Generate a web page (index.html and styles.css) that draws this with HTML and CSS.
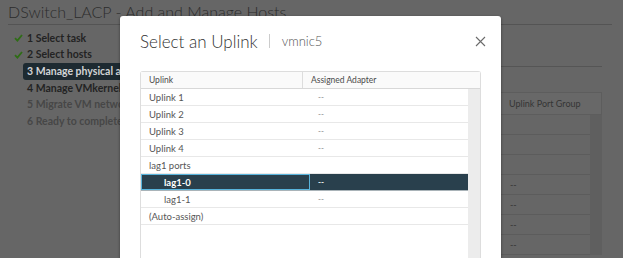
FILE: index.html
```html
<!DOCTYPE html>
<html lang="en">
<head>
  <meta charset="UTF-8">
  <meta name="viewport" content="width=device-width, initial-scale=1.0">
  <title>DSwitch_LACP - Add and Manage Hosts</title>
  <link rel="stylesheet" href="styles.css">
</head>
<body>
  <div class="wizard">
    <h1 class="wizard-title">DSwitch_LACP - Add and Manage Hosts</h1>
    <div class="wizard-body">
      <ol class="steps">
        <li class="step done"><span class="check"><svg width="9" height="8" viewBox="0 0 9 8"><path d="M1 4.2 L3.4 6.6 L8 1" fill="none" stroke="currentColor" stroke-width="1.8"/></svg></span><span class="step-label">1 Select task</span></li>
        <li class="step done"><span class="check"><svg width="9" height="8" viewBox="0 0 9 8"><path d="M1 4.2 L3.4 6.6 L8 1" fill="none" stroke="currentColor" stroke-width="1.8"/></svg></span><span class="step-label">2 Select hosts</span></li>
        <li class="step current"><span class="check"></span><span class="step-label">3 Manage physical adapters</span></li>
        <li class="step"><span class="check"></span><span class="step-label">4 Manage VMkernel adapters</span></li>
        <li class="step disabled"><span class="check"></span><span class="step-label">5 Migrate VM networking</span></li>
        <li class="step disabled"><span class="check"></span><span class="step-label">6 Ready to complete</span></li>
      </ol>
      <!-- the left part of this pane sits under the dialog -->
      <div class="step-content">
        <div class="step-head"></div>
        <div class="bg-grid">
          <div class="bg-grid-head">
            <span></span>
            <span>Uplink Port Group</span>
          </div>
          <div class="bg-grid-body">
            <div class="bg-grid-rows">
              <div class="bg-row"><span></span><span></span></div>
              <div class="bg-row"><span></span><span></span></div>
              <div class="bg-row"><span></span><span></span></div>
              <div class="bg-row"><span></span><span>--</span></div>
              <div class="bg-row"><span></span><span>--</span></div>
              <div class="bg-row"><span></span><span>--</span></div>
              <div class="bg-row"><span></span><span>--</span></div>
            </div>
            <div class="bg-scroll"></div>
          </div>
        </div>
      </div>
    </div>
  </div>

  <div class="modal">
    <div class="modal-header">
      <h2 class="modal-title">Select an Uplink</h2>
      <span class="modal-sep"></span>
      <span class="modal-sub">vmnic5</span>
      <button class="modal-close" type="button" aria-label="Close">
        <svg width="11" height="11" viewBox="0 0 11 11"><path d="M1 1 L10 10 M10 1 L1 10" stroke="#6b6b6b" stroke-width="1.1" fill="none"/></svg>
      </button>
    </div>
    <div class="uplink-grid">
      <div class="grid-head">
        <span class="head-cell first">Uplink</span>
        <span class="head-cell">Assigned Adapter</span>
      </div>
      <div class="grid-body">
        <div class="grid-rows">
          <div class="grid-row"><span class="cell">Uplink 1</span><span class="cell dash">--</span></div>
          <div class="grid-row"><span class="cell">Uplink 2</span><span class="cell dash">--</span></div>
          <div class="grid-row"><span class="cell">Uplink 3</span><span class="cell dash">--</span></div>
          <div class="grid-row"><span class="cell">Uplink 4</span><span class="cell dash">--</span></div>
          <div class="grid-row"><span class="cell">lag1 ports</span><span class="cell"></span></div>
          <div class="grid-row selected"><span class="cell sub focus">lag1-0</span><span class="cell dash">--</span></div>
          <div class="grid-row"><span class="cell sub">lag1-1</span><span class="cell dash">--</span></div>
          <div class="grid-row"><span class="cell">(Auto-assign)</span><span class="cell"></span></div>
        </div>
        <div class="grid-scroll"></div>
      </div>
    </div>
  </div>
</body>
</html>
```

FILE: styles.css
```css
html, body {
  margin: 0;
  height: 100%;
}
body {
  background-color: #666666;
  font-family: Lato, "Open Sans", sans-serif;
  overflow: hidden;
  position: relative;
}

/* wizard behind the dialog, already dimmed */
.wizard {
  padding: 0 11px 0 8px;
}
.wizard-title {
  margin: 0;
  font-size: 16px;
  font-weight: 300;
  color: #2c2c2c;
  line-height: 24px;
  border-bottom: 1px solid #545454;
}
.wizard-body {
  display: flex;
}
.steps {
  list-style: none;
  margin: 5px 0 0 0;
  padding: 0 0 0 6px;
  width: 111px;
  flex-shrink: 0;
}
.step {
  display: flex;
  align-items: center;
  height: 16.6px;
  font-size: 10.5px;
  font-weight: 700;
  color: #232323;
  white-space: nowrap;
}
.check {
  width: 9px;
  flex-shrink: 0;
  color: #2f6d16;
  display: flex;
}
.step-label {
  padding: 0 4px;
  line-height: 17px;
  border-radius: 3px;
  flex: 1;
  overflow: hidden;
}
.step.current .step-label {
  background-color: #1d2a31;
  color: #d2d4d6;
}
.step.disabled {
  color: #474747;
}
.step-content {
  flex: 1;
  padding-right: 10px;
}
.step-head {
  height: 41px;
  border-bottom: 1px solid #555555;
}
.bg-grid {
  margin-top: 25px;
  font-size: 9px;
  color: #353535;
}
.bg-grid-head {
  display: grid;
  grid-template-columns: 1fr 102px;
  height: 23px;
  align-items: center;
  background-color: #686868;
  border: 1px solid #5d5d5d;
  box-sizing: border-box;
}
.bg-grid-head span,
.bg-row span {
  padding-left: 10px;
}
.bg-grid-body {
  display: flex;
}
.bg-grid-rows {
  flex: 1;
}
.bg-row {
  display: grid;
  grid-template-columns: 1fr 90px;
  height: 20px;
  align-items: center;
  border-bottom: 1px solid #5c5c5c;
  box-sizing: border-box;
}
.bg-scroll {
  width: 12px;
  background-color: #5f5f5f;
}

/* dialog */
.modal {
  position: absolute;
  left: 120px;
  top: 16px;
  width: 381px;
  height: 242px;
  background-color: #fff;
  border-radius: 3px 3px 0 0;
  box-shadow: 0 1px 3px rgba(0, 0, 0, 0.45);
  padding: 0 20px;
  box-sizing: border-box;
  overflow: hidden;
}
.modal-header {
  display: flex;
  align-items: center;
  height: 50px;
}
.modal-title {
  margin: 0;
  font-size: 17px;
  font-weight: 300;
  color: #313131;
}
.modal-sep {
  width: 1px;
  height: 14px;
  background-color: #cccccc;
  margin: 0 12px 0 11px;
}
.modal-sub {
  font-size: 13px;
  font-weight: 300;
  color: #565656;
}
.modal-close {
  margin-left: auto;
  margin-right: -5px;
  padding: 0;
  border: none;
  background: none;
  display: flex;
}
.uplink-grid {
  margin-top: 5px;
  border: 1px solid #dddddd;
  border-bottom: none;
  border-radius: 3px 3px 0 0;
  font-size: 9.5px;
  color: #565656;
}
.grid-head {
  display: grid;
  grid-template-columns: 162px 1fr;
  height: 16px;
  align-items: center;
  background-color: #fafafa;
  border-bottom: 1px solid #d8d8d8;
}
.head-cell {
  padding-left: 8px;
  font-size: 8.5px;
  color: #4a4a4a;
}
.head-cell.first {
  border-right: 1px solid #dddddd;
  height: 100%;
  display: flex;
  align-items: center;
}
.grid-body {
  display: flex;
  height: 170px;
}
.grid-rows {
  flex: 1;
}
.grid-row {
  display: grid;
  grid-template-columns: 169px 1fr;
  height: 17px;
  border-bottom: 1px solid #e8e8e8;
  box-sizing: border-box;
}
.cell {
  padding-left: 8px;
  display: flex;
  align-items: center;
}
.cell.sub {
  padding-left: 23px;
}
.cell.dash {
  font-size: 8px;
  color: #777;
}
.grid-row.selected {
  background-color: #29404d;
  color: #fff;
  font-weight: 700;
  border-bottom-color: #a9b3b8;
}
.grid-row.selected .cell.dash {
  color: #fff;
}
.cell.focus {
  outline: 1px solid #58b4dc;
  outline-offset: -1px;
}
.grid-scroll {
  width: 12px;
  background-color: #ececec;
}
```
